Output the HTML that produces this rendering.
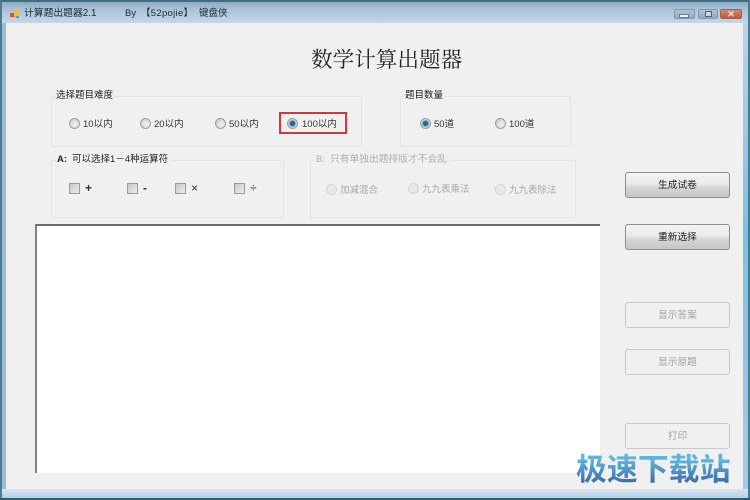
<!DOCTYPE html>
<html><head><meta charset="utf-8">
<style>
html,body{margin:0;padding:0}
body{width:750px;height:500px;overflow:hidden;position:relative;background:#f0f0f0;font-family:"Liberation Sans","Noto Sans CJK SC",sans-serif;font-size:9.6px;color:#333}
div,span{position:absolute;white-space:nowrap}
.wrap{left:0;top:0;width:750px;height:500px;filter:blur(.35px)}
.frame{left:0;top:0;width:750px;height:500px;background:linear-gradient(90deg,#9dbad8 0,#b4cbe2 50%,#a9c5e0 100%)}
.titlebar{left:0;top:0;width:750px;height:23px;background:linear-gradient(180deg,#86a3bd 0,#a9c2d9 40%,#c4d7e9 100%)}
.edgeT{left:0;top:0;width:750px;height:2px;background:#3f6f7e}
.edgeL{left:0;top:0;width:1.5px;height:500px;background:#4d7c90}
.edgeR{left:748px;top:0;width:2px;height:500px;background:#3f7f95}
.edgeB{left:0;top:498px;width:750px;height:2px;background:#2f5d70}
.sideR{left:743px;top:23px;width:5px;height:466px;background:linear-gradient(180deg,#bcd3e8 0,#7fc0e0 45%,#a8cae4 100%)}
.botf{left:2px;top:489px;width:746px;height:9px;background:linear-gradient(180deg,#d8e6f2,#b5cfe6)}
.body{left:6px;top:23px;width:737px;height:466px;background:#f0f0f0}
.t{line-height:12px;font-size:9.5px}
.grp{border:1px solid #e4e4e4;box-sizing:border-box;border-radius:2px}
.lg{background:#f0f0f0;padding:0 1px;line-height:12px;font-size:9.5px;color:#222}
.r{width:9px;height:9px;border-radius:50%;border:1px solid #a0a0a0;background:radial-gradient(circle at 60% 60%,#f4f4f4 0,#d8d8d8 60%,#bcbcbc 100%);box-sizing:content-box}
.r.on{background:radial-gradient(circle,#1f5f80 0,#2f7a9c 40%,#c8d4dc 55%,#c8c8c8 100%)}
.r.dis{border-color:#d4d4d4;background:#e8e8e8}
.c{width:9px;height:9px;border:1px solid #9a9a9a;background:linear-gradient(135deg,#c8c8c8,#ececec)}
.dim{color:#a8a8a8}
.btn{left:625px;width:105px;height:26px;box-sizing:border-box;border:1px solid #8f8f8f;border-radius:3px;background:linear-gradient(180deg,#f3f3f3 0,#eaeaea 45%,#d6d6d6 60%,#c6c6c6 100%);text-align:center;line-height:26px;font-size:9.7px;color:#222}
.btn.dis{border-color:#c8c8c8;background:#f0f0f0;color:#a2a2a2}
.wb{top:9px;height:10px;box-sizing:border-box;border:1px solid #8299b0;border-radius:2px;background:linear-gradient(180deg,#b0c2d4,#95aac0)}
</style></head><body>
<div class="wrap">
<div class="frame"></div>
<div class="titlebar"></div>
<div class="sideR"></div>
<div class="botf"></div>
<div class="edgeT"></div><div class="edgeL"></div><div class="edgeR"></div><div class="edgeB"></div>
<div class="body"></div>

<!-- title icon -->
<div style="left:10px;top:13px;width:5px;height:4px;background:#d2553a"></div>
<div style="left:14px;top:10px;width:6px;height:6px;background:#e8c050"></div>
<div style="left:16px;top:16px;width:3px;height:2px;background:#7a90a8"></div>

<div class="t" style="left:24px;top:8px;color:#1c2a38;font-size:9.8px">计算题出题器2.1</div>
<div class="t" style="left:125px;top:8px;color:#1c2a38">By</div>
<div class="t" style="left:141px;top:8px;color:#1c2a38;letter-spacing:.3px">【52pojie】</div>
<div class="t" style="left:199px;top:8px;color:#1c2a38">键盘侠</div>

<!-- window buttons -->
<div class="wb" style="left:674px;width:21px"></div>
<div style="left:680px;top:15px;width:8px;height:2px;background:#eef3f8;outline:1px solid #6b7e90"></div>
<div class="wb" style="left:698px;width:20px"></div>
<div style="left:705px;top:11px;width:5px;height:4px;border:1.5px solid #4d6072;background:#c9d8e6"></div>
<div class="wb" style="left:720px;width:22px;border-color:#a8634f;background:linear-gradient(180deg,#d68a72,#c0553c)"></div>
<div style="left:720px;top:9px;width:22px;height:10px;line-height:10px;text-align:center;font-size:9px;font-weight:bold;color:#f0e4de">✕</div>

<!-- heading -->
<div style="left:311px;top:45px;font-family:'Liberation Serif','Noto Serif CJK SC',serif;font-size:21.6px;line-height:30px;color:#222">数学计算出题器</div>

<!-- group 1 -->
<div class="grp" style="left:51px;top:96px;width:311px;height:51px"></div>
<div class="lg" style="left:55px;top:90px;height:12px">选择题目难度</div>
<div class="r" style="left:69px;top:118px"></div><div class="t" style="left:83px;top:119px">10以内</div>
<div class="r" style="left:140px;top:118px"></div><div class="t" style="left:154px;top:119px">20以内</div>
<div class="r" style="left:215px;top:118px"></div><div class="t" style="left:229px;top:119px">50以内</div>
<div class="r on" style="left:287px;top:118px"></div><div class="t" style="left:302px;top:119px">100以内</div>
<div style="left:279px;top:112px;width:68px;height:22px;box-sizing:border-box;border:2px solid #d0383c"></div>

<!-- group 2 -->
<div class="grp" style="left:400px;top:96px;width:171px;height:51px"></div>
<div class="lg" style="left:404px;top:90px">题目数量</div>
<div class="r on" style="left:420px;top:118px"></div><div class="t" style="left:434px;top:119px">50道</div>
<div class="r" style="left:495px;top:118px"></div><div class="t" style="left:509px;top:119px">100道</div>

<!-- group 3 -->
<div class="grp" style="left:51px;top:160px;width:233px;height:58px"></div>
<div class="lg" style="left:56px;top:154px;width:113px;height:12px"></div>
<div class="t" style="left:57px;top:154px;color:#222;font-weight:bold">A:</div>
<div class="t" style="left:72px;top:154px;color:#222">可以选择1－4种运算符</div>
<div class="c" style="left:69px;top:183px"></div><div class="t" style="left:85px;top:182px;font-size:12px;font-weight:bold">+</div>
<div class="c" style="left:127px;top:183px"></div><div class="t" style="left:143px;top:182px;font-size:12px;font-weight:bold">-</div>
<div class="c" style="left:175px;top:183px"></div><div class="t" style="left:191px;top:182px;font-size:12px">×</div>
<div class="c" style="left:234px;top:183px"></div><div class="t" style="left:250px;top:182px;font-size:12px">÷</div>

<!-- group 4 -->
<div class="grp" style="left:310px;top:160px;width:266px;height:58px"></div>
<div class="lg" style="left:315px;top:154px;width:133px;height:12px"></div>
<div class="t" style="left:316px;top:154px;color:#b0b0b0">B:</div>
<div class="t" style="left:330px;top:154px;color:#b0b0b0;font-size:9.75px">只有单独出题排版才不会乱</div>
<div class="r dis" style="left:326px;top:184px"></div><div class="t dim" style="left:340px;top:185px">加减混合</div>
<div class="r dis" style="left:408px;top:183px"></div><div class="t dim" style="left:422px;top:184px">九九表乘法</div>
<div class="r dis" style="left:495px;top:184px"></div><div class="t dim" style="left:509px;top:185px">九九表除法</div>

<!-- text area -->
<div style="left:35px;top:224px;width:565px;height:249px;background:#fff;box-sizing:border-box;border-top:2px solid #6e6e6e;border-left:2px solid #808080"></div>

<!-- buttons -->
<div class="btn" style="top:172px">生成试卷</div>
<div class="btn" style="top:224px">重新选择</div>
<div class="btn dis" style="top:302px">显示答案</div>
<div class="btn dis" style="top:349px">显示原题</div>
<div class="btn dis" style="top:423px">打印</div>
</div>

<!-- watermark -->
<div style="left:576px;top:449px;font-size:30.9px;line-height:42px;font-weight:bold;background:linear-gradient(180deg,#5cb6de 25%,#3f6ca6 80%);-webkit-background-clip:text;background-clip:text;color:transparent">极速下载站</div>
</body></html>
